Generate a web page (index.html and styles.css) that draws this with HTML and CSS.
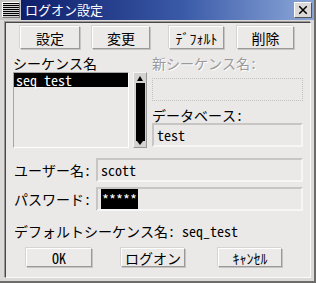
FILE: index.html
```html
<!DOCTYPE html>
<html lang="ja">
<head>
<meta charset="utf-8">
<link rel="stylesheet" href="styles.css">
</head>
<body>
<div class="window">
  <div class="titlebar">
    <div class="sysmenu"><div class="sysicon"></div></div>
    <div class="title">ログオン設定</div>
    <div class="close">
      <svg width="12" height="11" viewBox="0 0 12 11"><path d="M1.5 1 L10.5 10 M10.5 1 L1.5 10" stroke="#000" stroke-width="1.8" fill="none"/></svg>
    </div>
  </div>
  <div class="client">
    <div class="toolbar">
      <button class="btn b-set">設定</button>
      <button class="btn b-chg">変更</button>
      <button class="btn b-def">ﾃﾞﾌｫﾙﾄ</button>
      <button class="btn b-del">削除</button>
    </div>
    <div class="middle">
      <div class="left">
        <div class="label">シーケンス名</div>
        <div class="listwrap">
          <div class="listbox"><div class="item sel">seq_test</div></div>
          <div class="scroll">
            <div class="arrow up"></div>
            <div class="trough"></div>
            <div class="arrow down"></div>
          </div>
        </div>
      </div>
      <div class="right">
        <div class="label disabled">新シーケンス名:</div>
        <div class="field dis"></div>
        <div class="label lbl2">データベース:</div>
        <div class="field db">test</div>
      </div>
    </div>
    <div class="formrow first">
      <div class="flabel">ユーザー名:</div>
      <div class="field wide">scott</div>
    </div>
    <div class="formrow">
      <div class="flabel">パスワード:</div>
      <div class="field wide"><span class="hl">*****</span></div>
    </div>
    <div class="defline">デフォルトシーケンス名: seq_test</div>
    <div class="actions">
      <button class="btn a-ok">OK</button>
      <button class="btn a-log">ログオン</button>
      <button class="btn a-can">ｷｬﾝｾﾙ</button>
    </div>
  </div>
</div>
</body>
</html>
```
FILE: styles.css
```css
* { box-sizing: border-box; }
html, body { margin: 0; padding: 0; }
body {
  width: 316px; height: 283px; overflow: hidden;
  background: #d6d4d2;
  font-family: "Noto Sans Mono CJK JP", "Noto Sans CJK JP", sans-serif;
  font-size: 14px; color: #000;
}
.window {
  width: 316px; height: 283px;
  background: #dcdad8;
  border-right: 2px solid #6e6c6a;
  border-bottom: 2px solid #6e6c6a;
  display: flex; flex-direction: column;
}
.titlebar { height: 20px; display: flex; align-items: stretch; }
.sysmenu {
  width: 21px; background: #c8c6c4;
  display: flex; align-items: center; justify-content: center;
}
.sysicon {
  width: 18px; height: 16px; border: 1px solid #fff; border-right-color: #777; border-bottom-color: #777;
  background: repeating-linear-gradient(to bottom, #000 0 1px, #d0d0d0 1px 2px);
}
.title {
  flex: 1; color: #fff; font-size: 13px; line-height: 20px; padding-left: 4px;
  background: linear-gradient(to right, #0e1e6a, #3a5aa8 60%, #7f9ad0);
  font-family: "Noto Sans CJK JP", sans-serif;
}
.close {
  width: 23px; display: flex; align-items: center; justify-content: center;
  background: linear-gradient(to right, #7f9ad0, #8aa2d4);
}
.close svg {
  width: 18px; height: 16px; padding: 2px 3px; background: #dcdad8;
  border: 1px solid #fff; border-right-color: #555; border-bottom-color: #555;
}
.client {
  margin: 2px 3px 3px 5px; flex: 1;
  background: #ebe9e7;
  border: 1px solid #4a4846;
  border-right-color: #fafafa; border-bottom-color: #fafafa;
  box-shadow: -1px -1px 0 #9a9896;
  padding: 2px 0 0 7px;
  display: flex; flex-direction: column;
}
.btn {
  font: inherit; color: #000; padding: 0; margin: 0;
  background: #eceae8;
  border: 1px solid #fff; border-right-color: #9c9a98; border-bottom-color: #9c9a98;
  box-shadow: 1px 1px 0 #c6c4c2, -1px -1px 0 #d6d4d2;
  height: 23px; line-height: 20px;
}
.toolbar { display: flex; padding-left: 7px; height: 28px; align-items: flex-start; margin-top: 1px; }
.b-set { width: 60px; }
.b-chg { width: 58px; margin-left: 12px; }
.b-def { width: 55px; margin-left: 19px; }
.b-del { width: 57px; margin-left: 13px; }
.middle { display: flex; margin-top: 2px; }
.left { width: 135px; }
.label { height: 14px; line-height: 14px; white-space: nowrap; }
.listwrap { display: flex; height: 76px; margin-top: 2px; }
.listbox {
  width: 116px; height: 76px; background: #ebe9e7;
  border: 1px solid #a8a6a4; border-right-color: #fff; border-bottom-color: #fff;
  padding: 0;
}
.item { height: 14px; line-height: 14px; padding-left: 2px; }
.item.sel { background: #000; color: #fff; }
.scroll {
  width: 14px; margin-left: 4px; height: 76px;
  background: #d4d2d0; border: 1px solid #f4f4f4; border-right-color: #9a9896; border-bottom-color: #9a9896;
  display: flex; flex-direction: column; align-items: center; padding: 0 1px;
}
.arrow { width: 10px; height: 10px; position: relative; flex: none; }
.arrow.up::after, .arrow.down::after {
  content: ""; position: absolute; left: 2px; border-left: 3px solid transparent; border-right: 3px solid transparent;
}
.arrow.up::after { top: 3px; border-bottom: 5px solid #000; }
.arrow.down { height: 6px; }
.arrow.down::after { top: 0; border-top: 4px solid #000; }
.trough { flex: 1; width: 9px; background: #000; }
.right { width: 151px; margin-left: 4px; }
.label.disabled { color: #9a9a9a; text-shadow: 1px 1px 0 #fff; }
.field {
  height: 24px; line-height: 20px; padding-left: 3px;
  background: #ebe9e7;
  border: 2px solid #c8c6c4; border-right-color: #f6f6f6; border-bottom-color: #f6f6f6;
}
.field.dis { margin-top: 8px; border: 1px dotted #c4c2c0; height: 23px; }
.lbl2 { margin-top: 7px; }
.field.db { margin-top: 1px; }
.formrow { display: flex; align-items: center; margin-top: 5px; height: 24px; }
.formrow.first { margin-top: 10px; }
.flabel { width: 83px; padding-left: 1px; }
.field.wide { width: 207px; }
.hl { background: #000; color: #fff; padding: 0 1px; }
.defline { margin-top: 12px; height: 16px; line-height: 16px; padding-left: 1px; }
.actions { display: flex; margin-top: 9px; padding-left: 13px; }
.actions .btn { height: 19px; line-height: 16px; }
.a-ok { width: 66px; }
.a-log { width: 64px; margin-left: 29px; }
.a-can { width: 64px; margin-left: 33px; }
```
